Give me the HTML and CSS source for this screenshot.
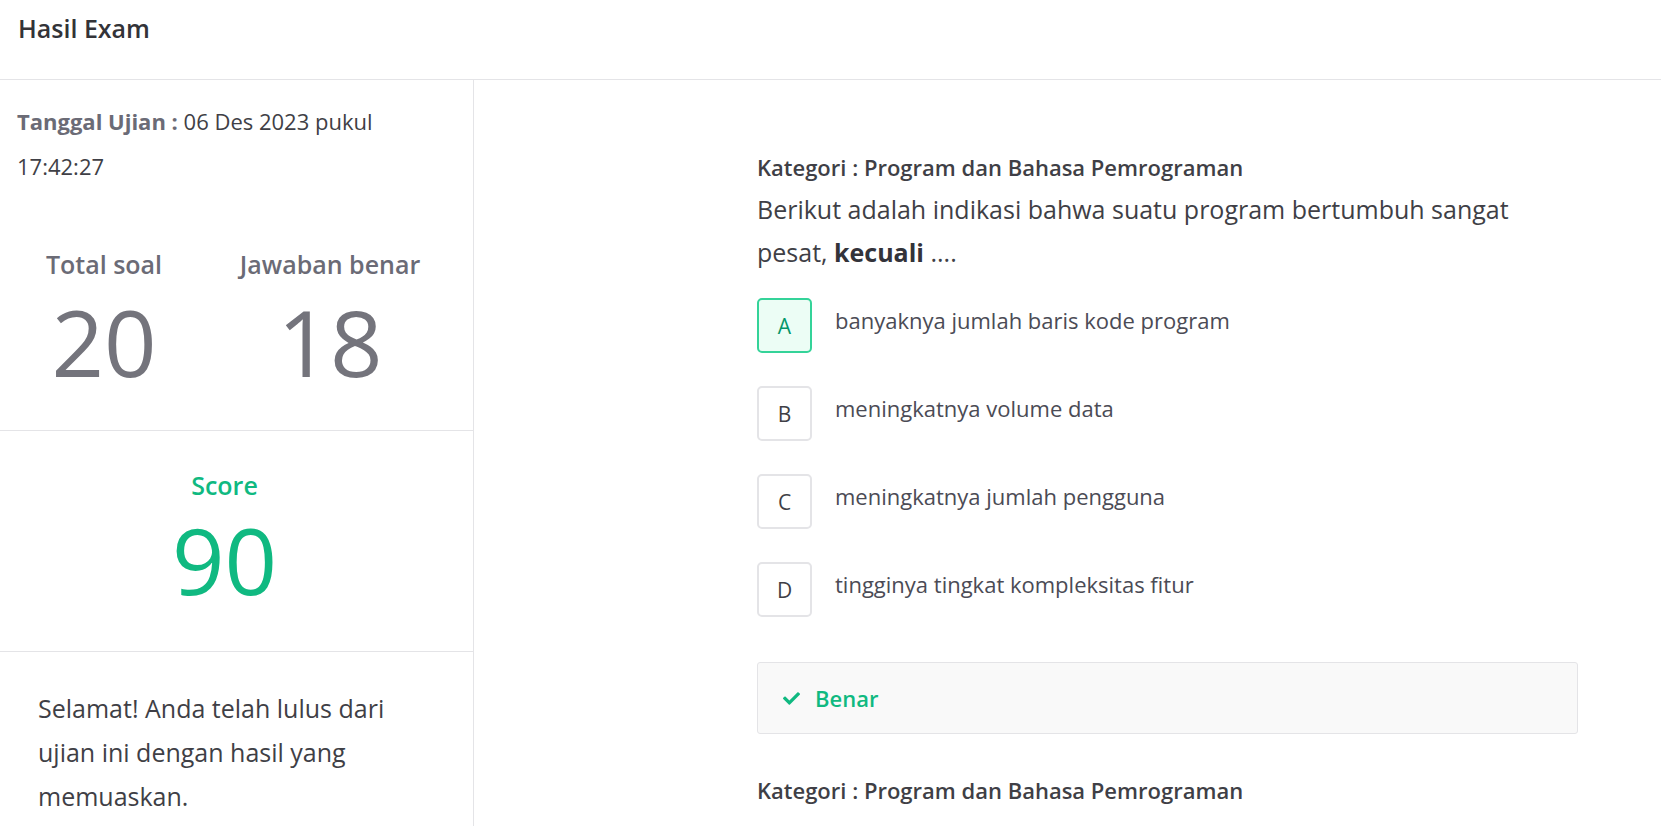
FILE: index.html
```html
<!DOCTYPE html>
<html lang="id">
<head>
<meta charset="utf-8">
<title>Hasil Exam</title>
<link rel="stylesheet" href="styles.css">
</head>
<body>
<header class="topbar">
  <h1 class="title">Hasil Exam</h1>
</header>
<div class="layout">
  <aside class="sidebar">
    <section class="card card-info">
      <p class="date"><b class="date-label">Tanggal Ujian :</b> 06 Des 2023 pukul 17:42:27</p>
      <div class="stats">
        <div class="stat">
          <div class="stat-label">Total soal</div>
          <div class="stat-value">20</div>
        </div>
        <div class="stat">
          <div class="stat-label">Jawaban benar</div>
          <div class="stat-value">18</div>
        </div>
      </div>
    </section>
    <section class="card card-score">
      <div class="score-label">Score</div>
      <div class="score-value">90</div>
    </section>
    <section class="card card-msg">
      <p class="msg">Selamat! Anda telah lulus dari ujian ini dengan hasil yang memuaskan.</p>
    </section>
  </aside>
  <main class="main">
    <div class="questions">
      <article class="question">
        <div class="category">Kategori : Program dan Bahasa Pemrograman</div>
        <p class="q-text">Berikut adalah indikasi bahwa suatu program bertumbuh sangat pesat, <b>kecuali</b> ....</p>
        <ul class="options">
          <li class="option"><span class="opt-key opt-selected">A</span><span class="opt-text">banyaknya jumlah baris kode program</span></li>
          <li class="option"><span class="opt-key">B</span><span class="opt-text">meningkatnya volume data</span></li>
          <li class="option"><span class="opt-key">C</span><span class="opt-text">meningkatnya jumlah pengguna</span></li>
          <li class="option"><span class="opt-key">D</span><span class="opt-text">tingginya tingkat kompleksitas fitur</span></li>
        </ul>
        <div class="result">
          <svg class="check" viewBox="0 0 512 512" width="17" height="17" aria-hidden="true"><path fill="currentColor" d="M173.9 439.4L7.5 273c-10-10-10-26.2 0-36.2l36.2-36.2c10-10 26.2-10 36.2 0L192 312.7 432.1 72.6c10-10 26.2-10 36.2 0l36.2 36.2c10 10 10 26.2 0 36.2L210.1 439.4c-10 10-26.2 10-36.2 0z"/></svg>
          <span class="result-text">Benar</span>
        </div>
      </article>
      <article class="question">
        <div class="category">Kategori : Program dan Bahasa Pemrograman</div>
      </article>
    </div>
  </main>
</div>
</body>
</html>
```

FILE: styles.css
```css
* { box-sizing: border-box; }
html, body { margin: 0; padding: 0; }
body {
  font-family: "Open Sans", "Noto Sans", sans-serif;
  color: #3f3f46;
  background: #fff;
  height: 826px;
  overflow: hidden;
}
.topbar {
  height: 80px;
  border-bottom: 1px solid #e4e4e7;
  padding: 0 18px;
  display: flex;
  align-items: flex-start;
}
.title {
  margin: 0;
  padding-top: 11px;
  font-size: 25px;
  line-height: 34px;
  font-weight: 600;
  color: #333338;
}
.layout {
  display: flex;
  height: 746px;
}
.sidebar {
  width: 474px;
  flex: none;
  border-right: 1px solid #e4e4e7;
}
.card { border-bottom: 1px solid #e4e4e7; }
.card-info { height: 351px; padding: 19px 17px 0; }
.date {
  margin: 0;
  font-size: 22px;
  line-height: 45px;
  color: #3f3f46;
}
.date-label { color: #6b6b76; font-weight: 700; }
.stats {
  display: flex;
  gap: 26px;
  padding-left: 4px;
  margin-top: 59px;
  margin-left: -17px;
}
.stat { width: 200px; text-align: center; }
.stat-label {
  font-size: 25px;
  line-height: 32px;
  font-weight: 600;
  color: #6b6b76;
}
.stat-value {
  font-size: 92px;
  line-height: 110px;
  color: #74747c;
  margin-top: 7px;
}
.card-score {
  height: 221px;
  text-align: center;
  padding: 38px 24px 0 0;
}
.score-label {
  font-size: 25px;
  line-height: 32px;
  font-weight: 600;
  color: #10b981;
}
.score-value {
  font-size: 92px;
  line-height: 110px;
  color: #10b981;
  margin-top: 4px;
}
.card-msg { border-bottom: none; padding: 34px 45px 0 38px; }
.msg {
  margin: 0;
  font-size: 25px;
  line-height: 44px;
  color: #3f3f46;
}
.main { flex: 1; padding: 72px 0 0 283px; }
.questions { width: 821px; }
.question { margin-bottom: 41px; }
.category {
  font-size: 22px;
  line-height: 30px;
  font-weight: 600;
  color: #3f3f46;
}
.q-text {
  margin: 6px 0 0;
  font-size: 25px;
  line-height: 43px;
  color: #3f3f46;
}
.q-text b { font-weight: 700; color: #33333a; }
.options { list-style: none; margin: 24px 0 0; padding: 0; }
.option {
  display: flex;
  align-items: center;
  gap: 23px;
  margin-bottom: 33px;
}
.option:last-child { margin-bottom: 0; }
.opt-key {
  width: 55px;
  height: 55px;
  flex: none;
  display: flex;
  align-items: center;
  justify-content: center;
  border: 2px solid #e4e4e7;
  border-radius: 5px;
  font-size: 21px;
  color: #3f3f46;
  background: #fff;
}
.opt-selected {
  border-color: #34d399;
  background: #ecfdf5;
  color: #059669;
}
.opt-text {
  font-size: 22px;
  line-height: 30px;
  color: #4b4b55;
  margin-top: -11px;
}
.result {
  margin-top: 45px;
  height: 72px;
  border: 1px solid #e4e4e7;
  border-radius: 3px;
  background: #f9f9f9;
  display: flex;
  align-items: center;
  padding-left: 25px;
  gap: 15px;
  color: #10b981;
}
.check { flex: none; }
.result-text {
  font-size: 22px;
  line-height: 30px;
  font-weight: 600;
}
```
